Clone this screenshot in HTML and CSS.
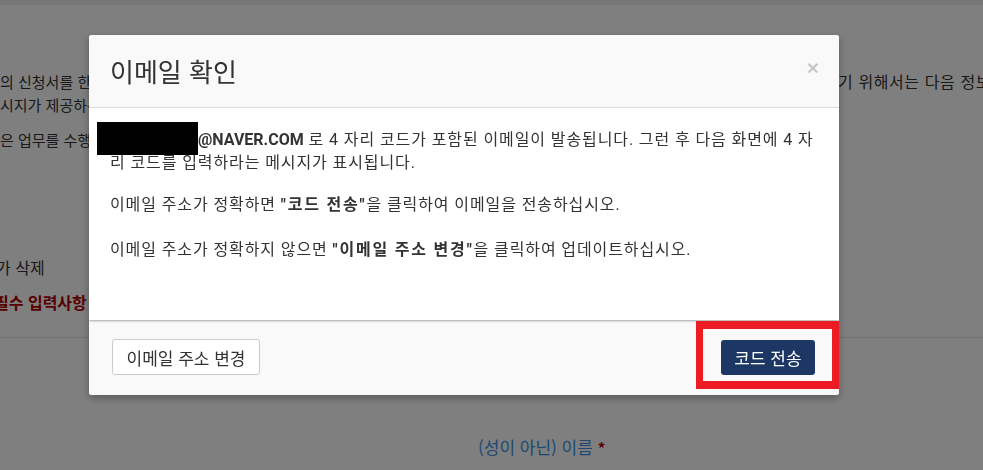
FILE: index.html
```html
<!DOCTYPE html>
<html lang="ko">
<head>
<meta charset="utf-8">
<title>이메일 확인</title>
<link rel="stylesheet" href="styles.css">
</head>
<body>
<div class="page">
  <div class="topbar"></div>
  <div class="content">
    <div class="line first">
      <span class="clip">의 신청서를 한국어로 작성하시려면 아래 단계를 따르십시오. 신청서를 제출하</span>
      <span class="tail">기 위해서는 다음 정보를 입력해야 합니다.</span>
    </div>
    <p class="line">시지가 제공하는 안내에 따라 필요한 정보를 입력하십시오.</p>
    <p class="line gap">은 업무를 수행하기 위해 필요한 정보입니다.</p>
    <p class="line del">가 삭제</p>
    <p class="line req">필수 입력사항</p>
    <hr class="rule">
    <div class="field">
      <label class="label">(성이 아닌) 이름 <span class="star">*</span></label>
    </div>
  </div>
</div>
<div class="backdrop"></div>
<div class="modal">
  <div class="modal-header">
    <h4 class="modal-title">이메일 확인</h4>
    <button class="close" type="button">×</button>
  </div>
  <div class="modal-body">
    <p class="para"><span class="user" aria-label="redacted"></span><b class="mail">@NAVER.COM</b> 로 4 자리 코드가 포함된 이메일이 발송됩니다. 그런 후 다음 화면에 4 자리 코드를 입력하라는 메시지가 표시됩니다.</p>
    <p class="para">이메일 주소가 정확하면 <b>"코드 전송"</b>을 클릭하여 이메일을 전송하십시오.<br><br>이메일 주소가 정확하지 않으면 <b>"이메일 주소 변경"</b>을 클릭하여 업데이트하십시오.</p>
    <div class="redact"></div>
  </div>
  <div class="modal-footer">
    <button class="btn btn-default" type="button">이메일 주소 변경</button>
    <button class="btn btn-primary" type="button">코드 전송</button>
  </div>
  <div class="annot"></div>
</div>
</body>
</html>
```

FILE: styles.css
```css
html, body {
  margin: 0;
  padding: 0;
}
body {
  background: #fff;
  font-family: "Noto Sans CJK KR", "Noto Sans", sans-serif;
  color: #333;
  overflow: hidden;
  height: 470px;
}
.page {
  width: 983px;
}
.topbar {
  height: 5px;
  background: #ececec;
}
.content {
  padding-top: 65px;
}
.line {
  margin: 0;
  font-size: 15px;
  line-height: 23px;
  white-space: nowrap;
  overflow: hidden;
}
.first {
  display: flex;
  align-items: baseline;
}
.clip {
  width: 838px;
  overflow: hidden;
  flex: none;
}
.tail {
  font-size: 16px;
  letter-spacing: 0.6px;
}
.gap {
  margin-top: 12px;
}
.del {
  margin-top: 105px;
  margin-left: -4px;
  font-size: 16px;
}
.req {
  margin-top: 12px;
  margin-left: -6px;
  font-size: 16px;
  color: #b00000;
  font-weight: 700;
}
.rule {
  margin: 23px 0 0;
  border: 0;
  border-top: 1px solid #e4e4e4;
}
.field {
  padding: 96px 0 0 478px;
}
.label {
  font-size: 17px;
  color: #3c8fe4;
}
.star {
  color: #b00000;
  font-weight: 700;
  font-size: 15px;
}
.backdrop {
  position: fixed;
  inset: 0;
  background: rgba(0, 0, 0, 0.5);
}
.modal {
  position: fixed;
  left: 89px;
  top: 35px;
  width: 750px;
  background: #fff;
  border-radius: 3px;
  box-shadow: 0 3px 9px rgba(0, 0, 0, 0.3);
  overflow: hidden;
}
.modal-header {
  height: 72px;
  background: #f9f9f9;
  border-bottom: 1px solid #e0e0e0;
  padding: 0 20px 0 21px;
  display: flex;
  align-items: center;
  justify-content: space-between;
}
.modal-title {
  margin: 0;
  font-size: 26px;
  font-weight: 400;
  color: #333;
  line-height: 1;
}
.close {
  border: 0;
  background: none;
  padding: 0;
  margin-top: -8px;
  font-family: "Liberation Sans", Arial, sans-serif;
  font-size: 21px;
  font-weight: 700;
  line-height: 1;
  color: #000;
  opacity: 0.2;
}
.modal-body {
  position: relative;
  z-index: 1;
  height: 212px;
  box-sizing: border-box;
  padding: 21px 20px 20px 21px;
  background: #fff;
  box-shadow: 0 1px 2px rgba(0, 0, 0, 0.35);
  font-family: Roboto, "Noto Sans CJK KR", sans-serif;
  font-size: 16px;
  line-height: 22.86px;
  letter-spacing: 0.9px;
  color: #333;
}
.para {
  margin: 0 0 19px;
}
.para b {
  letter-spacing: 1.8px;
}
.para .mail {
  letter-spacing: 0;
}
.user {
  display: inline-block;
  width: 88px;
  height: 1em;
  vertical-align: baseline;
}
.redact {
  position: absolute;
  left: 8px;
  top: 14px;
  width: 101px;
  height: 33px;
  background: #000;
}
.modal-footer {
  background: #f9f9f9;
  padding: 19px 24px 20px 23px;
  display: flex;
  justify-content: space-between;
  align-items: center;
}
.btn {
  font-family: "Noto Sans CJK KR", sans-serif;
  border-radius: 3px;
  padding: 0;
  cursor: pointer;
}
.btn-default {
  width: 148px;
  height: 36px;
  background: #fff;
  border: 1px solid #ccc;
  font-size: 17px;
  color: #333;
}
.btn-primary {
  width: 94px;
  height: 35px;
  background: #1c3764;
  border: 0;
  font-size: 17px;
  color: #fff;
}
.annot {
  position: absolute;
  left: 607px;
  top: 286px;
  width: 143px;
  height: 68px;
  box-sizing: border-box;
  border: 7px solid #ed1c24;
  border-top-width: 8px;
  border-bottom-width: 8px;
  z-index: 2;
}
```
